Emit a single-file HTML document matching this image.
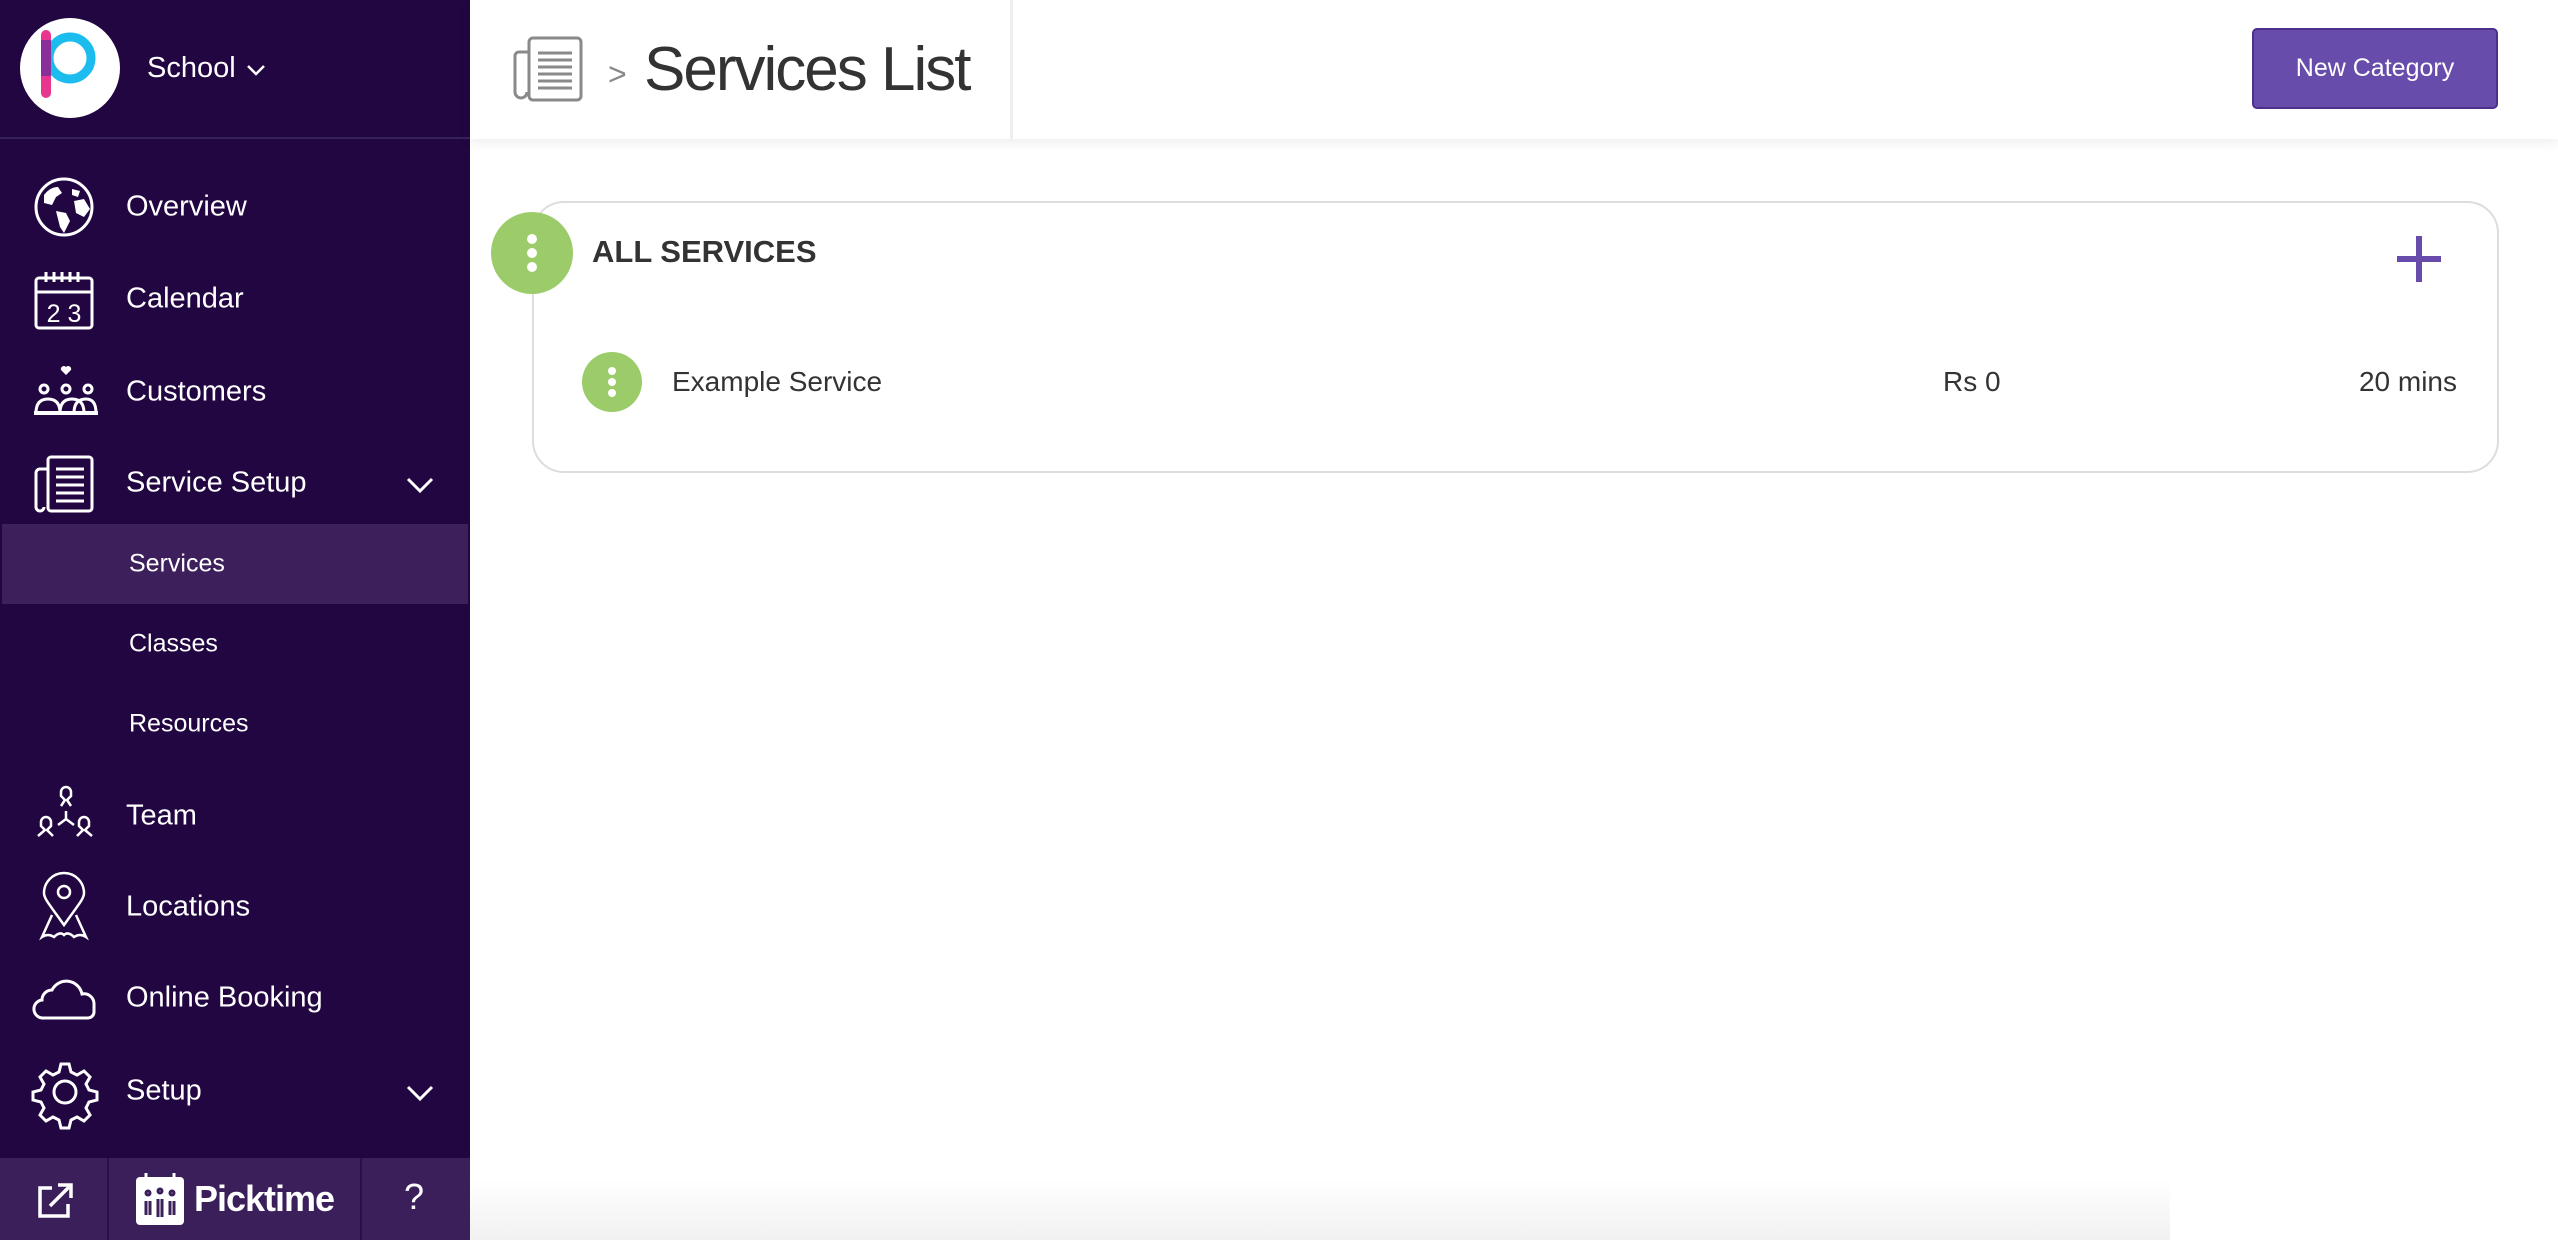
<!DOCTYPE html>
<html><head><meta charset="utf-8"><style>
*{margin:0;padding:0;box-sizing:border-box}
body{width:2558px;height:1240px;overflow:hidden;background:#fff;font-family:"Liberation Sans",sans-serif;position:relative}
.sb{position:absolute;left:0;top:0;width:470px;height:1240px;background:#220641}
.abs{position:absolute}
.nav{position:absolute;left:126px;color:#fff;font-size:29px;transform:translateY(-50%)}
.sub{position:absolute;left:129px;color:#fff;font-size:25px;transform:translateY(-50%)}
svg.ic{position:absolute;overflow:visible}
.chev{position:absolute;left:405px;width:30px;height:18px}
</style></head><body>
<div class="sb"></div>
<div class="abs" style="left:0;top:137px;width:470px;height:2px;background:#37215a"></div>
<svg class="ic" style="left:0;top:0" width="140" height="140">
<circle cx="70" cy="68" r="50" fill="#fff"/>
<circle cx="70" cy="58" r="21" fill="none" stroke="#1cbcef" stroke-width="9"/>
<rect x="41" y="30" width="10" height="68" rx="5" fill="#e8368f"/>
<rect x="41" y="40" width="10" height="36" fill="#8a2f9a"/>
</svg>
<div class="abs" style="left:147px;top:52px;color:#fff;font-size:29px">School</div>
<svg class="ic" style="left:246px;top:64px" width="20" height="12"><path d="M2 2 L10 10 L18 2" fill="none" stroke="#fff" stroke-width="2.5"/></svg>

<svg class="ic" style="left:34px;top:177px" width="60" height="60"><circle cx="30" cy="30" r="28" fill="none" stroke="#fff" stroke-width="3"/><path d="M10 18 q6-8 14-8 l4 6 -6 4 -4 8 -8-2z M22 34 l10 2 4 8 -6 12 -4-6z M38 12 l8 2 -2 6 -6-2z M40 24 l10-2 6 10 -6 8 -8-4z" fill="#fff"/></svg>
<svg class="ic" style="left:34px;top:270px" width="60" height="60"><rect x="2" y="8" width="56" height="50" rx="3" fill="none" stroke="#fff" stroke-width="3"/><line x1="2" y1="22" x2="58" y2="22" stroke="#fff" stroke-width="3"/><path d="M12 2v10M20 2v10M28 2v10M36 2v10M44 2v10" stroke="#fff" stroke-width="3"/><text x="30" y="52" fill="#fff" font-size="25" text-anchor="middle" font-family="Liberation Sans">2 3</text></svg>
<svg class="ic" style="left:34px;top:365px" width="64" height="52"><path d="M32 10 l-5-5 a3 3 0 0 1 5-3 a3 3 0 0 1 5 3z" fill="#fff"/><circle cx="10" cy="24" r="4" fill="none" stroke="#fff" stroke-width="3"/><circle cx="32" cy="24" r="4" fill="none" stroke="#fff" stroke-width="3"/><circle cx="54" cy="24" r="4" fill="none" stroke="#fff" stroke-width="3"/><path d="M2 48 q0-14 12-14 q12 0 12 14z M26 48 q0-14 12-14 q12 0 12 14z M40 48 q0-14 12-14 q10 0 10 14z" fill="none" stroke="#fff" stroke-width="3"/><line x1="0" y1="48" x2="64" y2="48" stroke="#fff" stroke-width="4"/></svg>
<svg class="ic" style="left:34px;top:455px" width="60" height="58"><rect x="14" y="2" width="44" height="54" rx="3" fill="none" stroke="#fff" stroke-width="3"/><path d="M14 14 H6 a4 4 0 0 0-4 4 V52 a4 4 0 0 0 8 0" fill="none" stroke="#fff" stroke-width="3"/><path d="M22 14h28M22 22h28M22 30h28M22 38h28M22 46h28" stroke="#fff" stroke-width="3"/></svg>
<svg class="ic" style="left:34px;top:785px" width="70" height="70"><g fill="none" stroke="#fff" stroke-width="2.5"><path d="M32 2 a5 5 0 0 1 5 5 v4 l-4 4 4 6 M32 2 a5 5 0 0 0-5 5 v4 l4 4 -4 6"/><path d="M12 32 a5 5 0 0 1 5 5 v4 l-4 4 6 6 M12 32 a5 5 0 0 0-5 5 v4 l4 4-7 6"/><path d="M50 32 a5 5 0 0 1 5 5 v4 l-4 4 7 6 M50 32 a5 5 0 0 0-5 5 v4 l4 4-6 6"/><path d="M32 26 v8 l-8 6 M32 34 l8 6"/></g></svg>
<svg class="ic" style="left:40px;top:875px" width="50" height="66"><g fill="none" stroke="#fff" stroke-width="2.5"><path d="M24 50 C10 30 4 24 4 18 a20 20 0 0 1 40 0 c0 6-6 12-20 32z"/><circle cx="24" cy="17" r="6"/><path d="M12 40 L2 62 q6-4 12 0 q6-6 10-2 q4-4 10 2 q6-4 12 0 L36 40"/></g></svg>
<svg class="ic" style="left:34px;top:972px" width="62" height="48"><path d="M10 46 a9 9 0 0 1-2-18 a10 10 0 0 1 10-10 a16 16 0 0 1 30 4 a10 10 0 0 1 12 10 V40 a6 6 0 0 1-6 6z" fill="none" stroke="#fff" stroke-width="3"/></svg>
<svg class="ic" style="left:34px;top:1061px" width="62" height="62"><g fill="none" stroke="#fff" stroke-width="3"><circle cx="31" cy="31" r="11"/><path d="M27 3h8l2 8 6 3 7-4 6 6-4 7 3 6 8 2v8l-8 2-3 6 4 7-6 6-7-4-6 3-2 8h-8l-2-8-6-3-7 4-6-6 4-7-3-6-8-2v-8l8-2 3-6-4-7 6-6 7 4 6-3z"/></g></svg>

<div class="nav" style="top:207px">Overview</div>
<div class="nav" style="top:299px">Calendar</div>
<div class="nav" style="top:392px">Customers</div>
<div class="nav" style="top:483px">Service Setup</div>
<svg class="chev" style="top:476px"><path d="M3 3 L15 15 L27 3" fill="none" stroke="#fff" stroke-width="3"/></svg>
<div class="abs" style="left:2px;top:524px;width:466px;height:80px;background:#3c1f5b"></div>
<div class="sub" style="top:564px">Services</div>
<div class="sub" style="top:644px">Classes</div>
<div class="sub" style="top:724px">Resources</div>
<div class="nav" style="top:816px">Team</div>
<div class="nav" style="top:907px">Locations</div>
<div class="nav" style="top:998px">Online Booking</div>
<div class="nav" style="top:1091px">Setup</div>
<svg class="chev" style="top:1084px"><path d="M3 3 L15 15 L27 3" fill="none" stroke="#fff" stroke-width="3"/></svg>

<div class="abs" style="left:0;top:1158px;width:470px;height:82px;background:#3b1f5a"></div>
<div class="abs" style="left:107px;top:1158px;width:2px;height:82px;background:#2a0f48"></div>
<div class="abs" style="left:360px;top:1158px;width:2px;height:82px;background:#2a0f48"></div>
<svg class="ic" style="left:36px;top:1182px" width="40" height="40"><path d="M16 6 H4 V34 H32 V22" fill="none" stroke="#fff" stroke-width="3.5"/><path d="M14 24 L34 4 M22 3 H35 V16" fill="none" stroke="#fff" stroke-width="3.5"/></svg>
<svg class="ic" style="left:136px;top:1171px" width="50" height="56"><rect x="0" y="6" width="48" height="48" rx="4" fill="#fff"/><path d="M10 2v8M38 2v8" stroke="#fff" stroke-width="3"/><g fill="none" stroke="#3b1f5a" stroke-width="3"><circle cx="12" cy="22" r="2"/><circle cx="24" cy="20" r="2"/><circle cx="36" cy="22" r="2"/><path d="M10 30v14M14 30v14M22 28v18M26 28v18M34 30v14M38 30v14"/></g></svg>
<div class="abs" style="left:194px;top:1178px;color:#fff;font-size:36px;font-weight:bold;letter-spacing:-1px">Picktime</div>
<div class="abs" style="left:404px;top:1176px;color:#fff;font-size:36px">?</div>

<div class="abs" style="left:470px;top:0;width:2088px;height:139px;background:#fff;box-shadow:0 3px 12px rgba(0,0,0,0.08)"></div>
<div class="abs" style="left:1010px;top:0;width:3px;height:139px;background:#eee"></div>
<svg class="ic" style="left:513px;top:36px" width="70" height="66"><g fill="none" stroke="#8a8a8a" stroke-width="3"><rect x="16" y="2" width="52" height="62" rx="4"/><path d="M16 16 H6 a4 4 0 0 0-4 4 V56 a6 6 0 0 0 12 0"/><path d="M25 17h34M25 24h34M25 31h34M25 38h34M25 45h34M25 52h34"/></g></svg>
<div class="abs" style="left:608px;top:56px;color:#888;font-size:32px">&gt;</div>
<div class="abs" style="left:644px;top:34px;color:#333;font-size:62px;letter-spacing:-2px">Services List</div>
<div class="abs" style="left:2252px;top:28px;width:246px;height:81px;background:#684cab;border:2px solid #4d2f8c;border-radius:5px;color:#fff;font-size:25px;line-height:77px;text-align:center">New Category</div>

<div class="abs" style="left:532px;top:201px;width:1967px;height:272px;border:2px solid #ddd;border-radius:32px;background:#fff"></div>
<svg class="ic" style="left:491px;top:212px" width="82" height="82"><circle cx="41" cy="41" r="41" fill="#9ccc6a"/><circle cx="41" cy="27" r="5" fill="#fff"/><circle cx="41" cy="41" r="5" fill="#fff"/><circle cx="41" cy="55" r="5" fill="#fff"/></svg>
<div class="abs" style="left:592px;top:234px;color:#333;font-size:31px;font-weight:bold">ALL SERVICES</div>
<div class="abs" style="left:2397px;top:256px;width:44px;height:6px;background:#684cab"></div>
<div class="abs" style="left:2416px;top:236px;width:6px;height:46px;background:#684cab"></div>
<svg class="ic" style="left:582px;top:352px" width="60" height="60"><circle cx="30" cy="30" r="30" fill="#9ccc6a"/><circle cx="30" cy="19" r="4" fill="#fff"/><circle cx="30" cy="30" r="4" fill="#fff"/><circle cx="30" cy="41" r="4" fill="#fff"/></svg>
<div class="abs" style="left:672px;top:366px;color:#333;font-size:28px">Example Service</div>
<div class="abs" style="left:1943px;top:366px;color:#333;font-size:28px">Rs 0</div>
<div class="abs" style="left:2257px;top:366px;width:200px;text-align:right;color:#333;font-size:28px">20 mins</div>

<div class="abs" style="left:470px;top:1180px;width:1700px;height:60px;background:linear-gradient(#fff,#f1f1f1)"></div>
</body></html>
